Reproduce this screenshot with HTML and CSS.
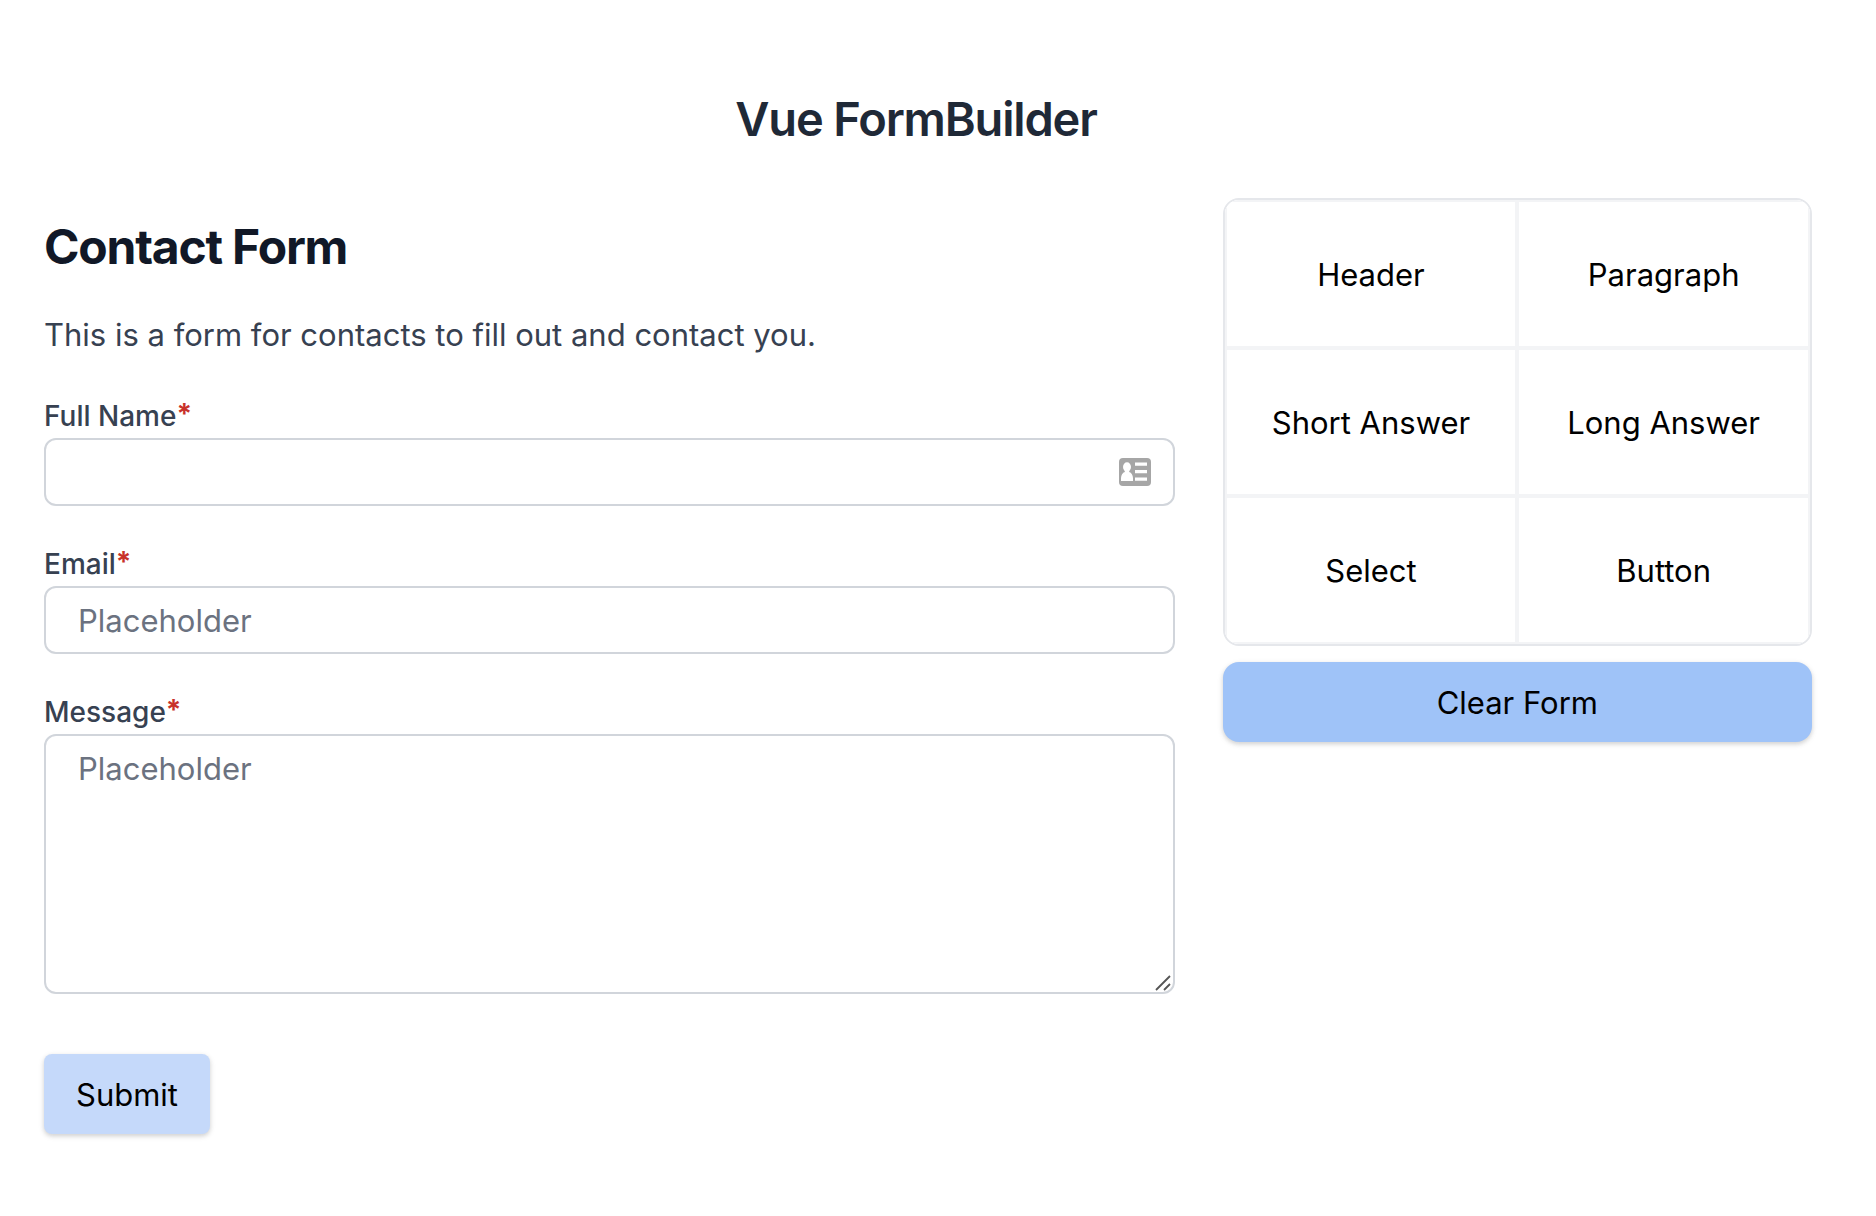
FILE: index.html
```html
<!DOCTYPE html>
<html lang="en">
<head>
  <meta charset="utf-8">
  <meta name="viewport" content="width=device-width, initial-scale=1">
  <title>Vue FormBuilder</title>
  <link rel="stylesheet" href="styles.css">
</head>
<body>
  <main class="page">
    <h1 class="page-title">Vue FormBuilder</h1>
    <div class="builder">
      <form class="form">
        <h2 class="form-title">Contact Form</h2>
        <p class="form-text">This is a form for contacts to fill out and contact you.</p>
        <div class="field">
          <label class="label" for="name">Full Name<span class="required">*</span></label>
          <div class="control-wrap">
            <input class="control" id="name" type="text">
            <svg class="autofill-icon" viewBox="0 0 32 28" aria-hidden="true">
              <rect width="32" height="28" rx="4" fill="#a6a6a6"/>
              <g fill="#fff">
                <ellipse cx="8" cy="9" rx="4" ry="4.7"/>
                <path d="M5.8 12.5h4.4V14c2.4.8 3.6 3 3.8 6v3H2v-3c.2-3 1.400-5.200 3.800-6z"/>
                <path d="M16 4.500h12v3.300H16zM16 12h12v3.300H16zM16 19.500h12v3.300H16z"/>
              </g>
            </svg>
          </div>
        </div>
        <div class="field">
          <label class="label" for="email">Email<span class="required">*</span></label>
          <input class="control" id="email" type="email" placeholder="Placeholder">
        </div>
        <div class="field">
          <label class="label" for="message">Message<span class="required">*</span></label>
          <div class="control-wrap">
            <textarea class="control message" id="message" placeholder="Placeholder"></textarea>
            <svg class="resize-handle" viewBox="0 0 16 16" aria-hidden="true">
              <path d="M1 15 15 1M9 15l6-6" fill="none" stroke="#555" stroke-width="1.800"/>
            </svg>
          </div>
        </div>
        <button class="button submit" type="submit">Submit</button>
      </form>
      <aside class="sidebar">
        <div class="palette">
          <button class="tile" type="button">Header</button>
          <button class="tile" type="button">Paragraph</button>
          <button class="tile" type="button">Short Answer</button>
          <button class="tile" type="button">Long Answer</button>
          <button class="tile" type="button">Select</button>
          <button class="tile" type="button">Button</button>
        </div>
        <button class="button clear" type="button">Clear Form</button>
      </aside>
    </div>
  </main>
</body>
</html>
```
FILE: styles.css
```css
*,
*::before,
*::after {
  box-sizing: border-box;
}

body {
  margin: 0;
  background: #fff;
  color: #000;
  font: 400 31px/48px Inter, "Liberation Sans", sans-serif;
}

h1,
h2,
p {
  margin: 0;
}

button,
input,
textarea {
  margin: 0;
  font: inherit;
  color: inherit;
}

.page {
  padding: 87px 64px 80px 20px;
}

.page-title {
  margin-bottom: 47px;
  color: #1f2937;
  font-size: 47px;
  font-weight: 600;
  line-height: 64px;
  letter-spacing: -0.025em;
  text-align: center;
}

.builder {
  display: grid;
  grid-template-columns: 2fr 1fr;
  gap: 24px;
  align-items: start;
}

.form {
  padding: 17px 24px;
}

.form-title {
  margin-bottom: 32px;
  color: #111827;
  font-size: 48px;
  font-weight: 700;
  line-height: 64px;
  letter-spacing: -0.025em;
}

.form-text {
  margin-bottom: 37px;
  color: #374151;
}

.field {
  display: flex;
  flex-direction: column;
  gap: 2px;
  margin-bottom: 38px;
}

.label {
  color: #374151;
  font-size: 28px;
  font-weight: 500;
  line-height: 40px;
}

.required {
  color: #c8322b;
  font-weight: 700;
  line-height: 1;
  vertical-align: 2px;
}

.control-wrap {
  position: relative;
  display: flex;
}

.control {
  display: block;
  width: 100%;
  height: 68px;
  padding: 8px 32px;
  border: 2px solid #d1d5db;
  border-radius: 12px;
  background: #fff;
}

.control::placeholder {
  color: #6b7280;
  opacity: 1;
}

.message {
  height: 260px;
  padding-top: 9px;
  resize: vertical;
}

.message::-webkit-resizer {
  background: transparent;
}

.resize-handle {
  position: absolute;
  right: 4px;
  bottom: 3px;
  width: 16px;
  height: 16px;
  pointer-events: none;
}

.autofill-icon {
  position: absolute;
  top: 20px;
  right: 24px;
  width: 32px;
  height: 28px;
}

.button {
  padding: 17px 32px 15px;
  border: 0;
  box-shadow: 0 2px 6px rgb(0 0 0 / 10%), 0 2px 4px rgb(0 0 0 / 10%);
  cursor: pointer;
}

.submit {
  margin-top: 22px;
  border-radius: 8px;
  background: #c5d9fa;
}

.sidebar {
  display: grid;
  gap: 16px;
}

.palette {
  display: grid;
  grid-template-columns: 1fr 1fr;
  overflow: hidden;
  border: 2px solid #e5e7eb;
  border-radius: 16px;
}

.tile {
  height: 148px;
  padding: 2px 0 0;
  border: 2px solid #f3f4f6;
  background: #fff;
  cursor: pointer;
}

.clear {
  border-radius: 16px;
  background: #9fc3f8;
}
```
